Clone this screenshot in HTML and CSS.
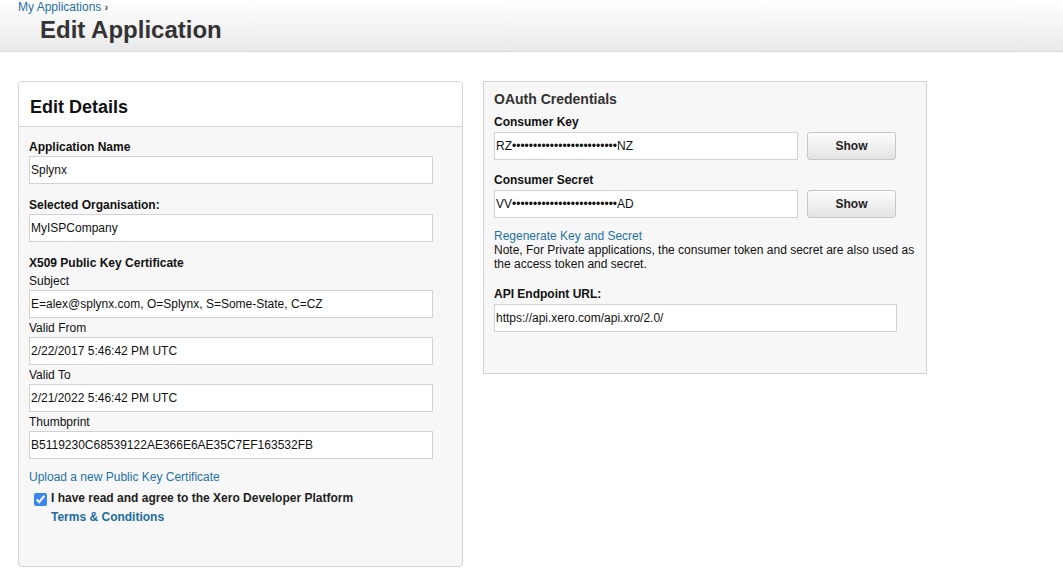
FILE: index.html
```html
<!DOCTYPE html>
<html lang="en">
<head>
<meta charset="utf-8">
<title>Edit Application</title>
<link rel="stylesheet" href="styles.css">
</head>
<body>
<header class="page-head">
  <div class="crumbs"><a href="#" class="crumb-link">My Applications</a> <span class="crumb-sep">›</span></div>
  <h1 class="page-title">Edit Application</h1>
</header>

<main class="content">
  <section class="panel panel-details">
    <div class="panel-head">
      <h2 class="panel-title">Edit Details</h2>
    </div>
    <div class="panel-body">
      <div class="field">
        <label class="label-strong">Application Name</label>
        <input class="text-input wide" type="text" value="Splynx">
      </div>
      <div class="field">
        <label class="label-strong">Selected Organisation:</label>
        <input class="text-input wide" type="text" value="MyISPCompany">
      </div>
      <div class="cert">
        <div class="label-strong">X509 Public Key Certificate</div>
        <div class="cert-row">
          <label class="label-plain">Subject</label>
          <input class="text-input wide" type="text" value="E=alex@splynx.com, O=Splynx, S=Some-State, C=CZ">
        </div>
        <div class="cert-row">
          <label class="label-plain">Valid From</label>
          <input class="text-input wide" type="text" value="2/22/2017 5:46:42 PM UTC">
        </div>
        <div class="cert-row">
          <label class="label-plain">Valid To</label>
          <input class="text-input wide" type="text" value="2/21/2022 5:46:42 PM UTC">
        </div>
        <div class="cert-row">
          <label class="label-plain">Thumbprint</label>
          <input class="text-input wide" type="text" value="B5119230C68539122AE366E6AE35C7EF163532FB">
        </div>
      </div>
      <a href="#" class="link upload-link">Upload a new Public Key Certificate</a>
      <div class="agree">
        <input class="agree-box" type="checkbox" checked>
        <div class="agree-text">I have read and agree to the Xero Developer Platform<br><a href="#" class="terms-link">Terms &amp; Conditions</a></div>
      </div>
    </div>
  </section>

  <section class="panel panel-oauth">
    <h2 class="oauth-title">OAuth Credentials</h2>
    <div class="label-strong oauth-label">Consumer Key</div>
    <div class="key-row">
      <input class="text-input key-input" type="text" value="RZ•••••••••••••••••••••••••NZ">
      <button class="btn" type="button">Show</button>
    </div>
    <div class="label-strong oauth-label secret-label">Consumer Secret</div>
    <div class="key-row">
      <input class="text-input key-input" type="text" value="VV•••••••••••••••••••••••••AD">
      <button class="btn" type="button">Show</button>
    </div>
    <div class="note-block">
      <a href="#" class="link">Regenerate Key and Secret</a><br>
      Note, For Private applications, the consumer token and secret are also used as the access token and secret.
    </div>
    <div class="label-strong oauth-label api-label">API Endpoint URL:</div>
    <input class="text-input api-input" type="text" value="https://api.xero.com/api.xro/2.0/">
  </section>
</main>
</body>
</html>
```

FILE: styles.css
```css
* { box-sizing: border-box; }

html, body {
  margin: 0;
  padding: 0;
  background: #fff;
}

body {
  font-family: "Liberation Sans", Arial, Helvetica, sans-serif;
  font-size: 12px;
  color: #111;
}

a { text-decoration: none; }

.page-head {
  height: 52px;
  padding: 0 0 0 18px;
  background: linear-gradient(#ffffff, #e9e9e9);
  border-bottom: 1px solid #d9d9d9;
}

.crumbs {
  line-height: 15px;
  font-size: 12px;
}

.crumb-link { color: #1f6fa6; }

.crumb-sep {
  color: #333;
  font-size: 10px;
  font-weight: bold;
}

.page-title {
  margin: 1px 0 0 22px;
  font-size: 24px;
  line-height: 28px;
  font-weight: bold;
  color: #333;
}

.content {
  display: flex;
  align-items: flex-start;
  gap: 21px;
  padding: 29px 0 0 18px;
}

.panel {
  width: 444px;
  border: 1px solid #d3d3d3;
  background: #f7f7f7;
}

.panel-details {
  width: 445px;
  border-radius: 4px;
  overflow: hidden;
}

.panel-head {
  height: 45px;
  padding: 15px 10px 0 11px;
  background: #fff;
  border-bottom: 1px solid #d6d6d6;
}

.panel-title {
  margin: 0;
  font-size: 18px;
  line-height: 20px;
  font-weight: bold;
  color: #111;
}

.panel-body {
  padding: 12px 10px 39px 10px;
}

.field { margin-bottom: 13px; }

.label-strong {
  display: block;
  font-weight: bold;
  line-height: 16px;
  color: #111;
}

.field .label-strong { margin-bottom: 1px; }

.label-plain {
  display: block;
  line-height: 16px;
  margin-bottom: 1px;
  color: #111;
}

.cert-row { margin-top: 2px; }

.text-input {
  display: block;
  height: 28px;
  padding: 0 0 0 1px;
  border: 1px solid #d2d2d2;
  border-radius: 0;
  background: #fff;
  font-family: "Liberation Sans", Arial, Helvetica, sans-serif;
  font-size: 12px;
  color: #111;
  outline: none;
}

.wide { width: 404px; }

.link { color: #1f72a8; }

.upload-link {
  display: block;
  margin-top: 10px;
  line-height: 16px;
}

.agree {
  display: flex;
  align-items: flex-start;
  margin-top: 4px;
}

.agree-box {
  width: 13px;
  height: 13px;
  margin: 4px 4px 0 5px;
  accent-color: #3a86f0;
  flex: none;
}

.agree-text {
  font-weight: bold;
  line-height: 19px;
  color: #222;
}

.terms-link { color: #1d6c9e; }

.panel-oauth {
  margin-left: -1px;
  padding: 9px 10px 41px 10px;
}

.oauth-title {
  margin: 0;
  font-size: 14px;
  line-height: 17px;
  font-weight: bold;
  color: #333;
}

.oauth-label {
  margin-top: 6px;
  margin-bottom: 2px;
}

.secret-label { margin-top: 12px; }

.key-row {
  display: flex;
  align-items: center;
  gap: 9px;
}

.key-input { width: 304px; }

.btn {
  width: 89px;
  height: 28px;
  padding: 0;
  border: 1px solid #c6c6c6;
  border-radius: 3px;
  background: linear-gradient(#fdfdfd, #e3e3e3);
  font-family: "Liberation Sans", Arial, Helvetica, sans-serif;
  font-size: 12px;
  font-weight: bold;
  color: #222;
}

.note-block {
  margin-top: 11px;
  line-height: 14px;
  color: #111;
}

.api-label { margin-top: 15px; }

.api-input { width: 403px; }
```
